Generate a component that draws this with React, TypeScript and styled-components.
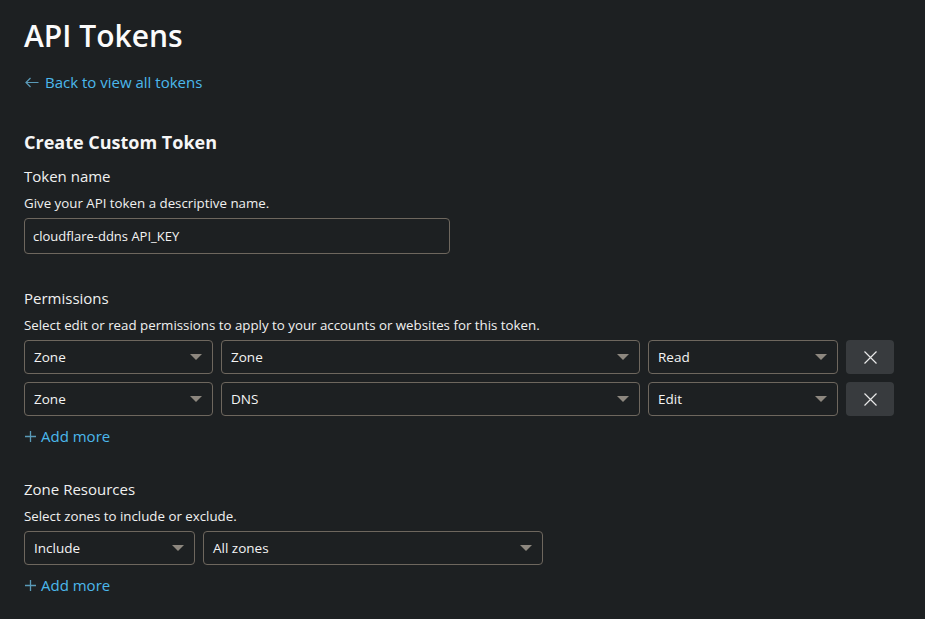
import styled, {createGlobalStyle} from "styled-components";

const GlobalStyle = createGlobalStyle`
    html, body {
        margin: 0;
        background: #1d2022;
    }
    body {
        font-family: "Open Sans", "Noto Sans", sans-serif;
        color: #f2f2f2;
    }
`;

const theme = {
    border: '#6e675e',
    link: '#4bb8ec',
    icon: '#5a9ab8',
    text: '#f0f0f0',
};

/**
 * Caret used at the right of every select.
 */
const Caret = () => <svg width="12" height="6" viewBox="0 0 12 6">
    <path d="M0 0 L12 0 L6 6 Z" fill="#8d877f"/>
</svg>;

/**
 * A fake select box: label text and a caret.
 */
const Select = ({label, width}: {label: string, width: number}) =>
    <SelectBox $width={width}>
        <span>{label}</span>
        <Caret/>
    </SelectBox>;

const RemoveButton = () => <IconButton>
    <svg width="13" height="13" viewBox="0 0 13 13">
        <path d="M0.5 0.5 L12.5 12.5 M12.5 0.5 L0.5 12.5" stroke="#e8e8e8" strokeWidth="1.2"/>
    </svg>
</IconButton>;

const AddMore = () => <AddLink>
    <svg width="11" height="11" viewBox="0 0 11 11">
        <path d="M5.5 0 V11 M0 5.5 H11" stroke={theme.icon} strokeWidth="1.3"/>
    </svg>
    Add more
</AddLink>;

const App = () => {
    return <Page>
        <GlobalStyle/>
        <Title>API Tokens</Title>
        <BackLink>
            <svg width="14" height="11" viewBox="0 0 14 11">
                <path d="M13.5 5.5 H1 M5.5 1 L1 5.5 L5.5 10" stroke={theme.icon} strokeWidth="1.2" fill="none"/>
            </svg>
            Back to view all tokens
        </BackLink>

        <SectionTitle>Create Custom Token</SectionTitle>

        <Field $top={11}>
            <Label>Token name</Label>
            <Hint>Give your API token a descriptive name.</Hint>
            <TextInput>cloudflare-ddns API_KEY</TextInput>
        </Field>

        <Field $top={34}>
            <Label>Permissions</Label>
            <Hint>Select edit or read permissions to apply to your accounts or websites for this token.</Hint>
            <Rows>
                <Row>
                    <Select label="Zone" width={189}/>
                    <Select label="Zone" width={419}/>
                    <Select label="Read" width={190}/>
                    <RemoveButton/>
                </Row>
                <Row>
                    <Select label="Zone" width={189}/>
                    <Select label="DNS" width={419}/>
                    <Select label="Edit" width={190}/>
                    <RemoveButton/>
                </Row>
            </Rows>
            <AddMore/>
        </Field>

        <Field $top={32}>
            <Label>Zone Resources</Label>
            <Hint>Select zones to include or exclude.</Hint>
            <Rows>
                <Row>
                    <Select label="Include" width={171}/>
                    <Select label="All zones" width={340}/>
                </Row>
            </Rows>
            <AddMore/>
        </Field>
    </Page>;
};

export default App;

const Page = styled.div`
    padding: 14px 24px 24px;
    min-height: 619px;
    box-sizing: border-box;
`;

const Title = styled.h1`
    margin: 0;
    font-size: 30px;
    font-weight: 600;
    line-height: 44px;
    color: #fbfbfb;
`;

const BackLink = styled.div`
    margin-top: 13px;
    display: flex;
    align-items: center;
    gap: 6px;
    padding-left: 1px;
    font-size: 15px;
    line-height: 22px;
    color: ${theme.link};
`;

const SectionTitle = styled.h2`
    margin: 36px 0 0;
    font-size: 18px;
    font-weight: 700;
    line-height: 26px;
    color: #f6f6f6;
`;

const Field = styled.div<{$top?: number}>`
    margin-top: ${props => props.$top ?? 8}px;
    display: flex;
    flex-direction: column;
`;

const Label = styled.div`
    font-size: 15px;
    line-height: 20px;
    color: ${theme.text};
`;

const Hint = styled.div`
    margin-top: 8px;
    font-size: 13.3px;
    line-height: 18px;
    color: ${theme.text};
`;

const TextInput = styled.div`
    margin-top: 6px;
    width: 426px;
    height: 36px;
    box-sizing: border-box;
    border: 1px solid ${theme.border};
    border-radius: 4px;
    padding: 0 8px;
    display: flex;
    align-items: center;
    font-size: 13px;
    color: #f4f4f4;
`;

const Rows = styled.div`
    margin-top: 6px;
    display: flex;
    flex-direction: column;
    gap: 8px;
`;

const Row = styled.div`
    display: flex;
    gap: 8px;
`;

const SelectBox = styled.div<{$width: number}>`
    width: ${props => props.$width}px;
    height: 34px;
    box-sizing: border-box;
    border: 1px solid ${theme.border};
    border-radius: 4px;
    padding: 0 10px 0 9px;
    display: flex;
    align-items: center;
    justify-content: space-between;
    font-size: 13.5px;
    color: #f4f4f4;
`;

const IconButton = styled.div`
    width: 48px;
    height: 34px;
    border-radius: 4px;
    background: #383b3e;
    display: flex;
    align-items: center;
    justify-content: center;
`;

const AddLink = styled.div`
    margin-top: 9px;
    display: flex;
    align-items: center;
    gap: 5px;
    padding-left: 1px;
    font-size: 15px;
    line-height: 22px;
    color: ${theme.link};
`;
